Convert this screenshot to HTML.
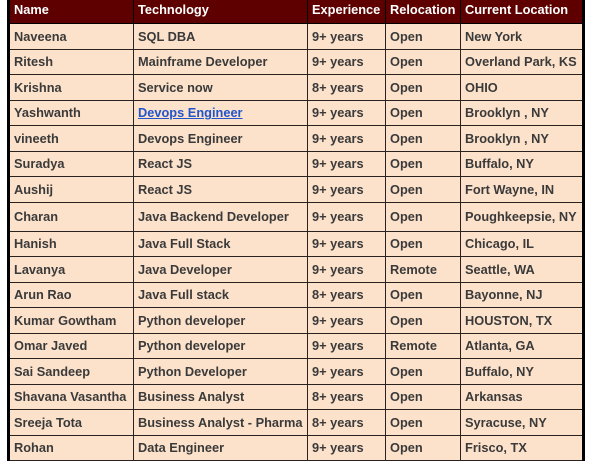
<!DOCTYPE html>
<html><head><meta charset="utf-8"><style>
html,body{margin:0;padding:0;background:#fff;width:600px;height:450px;overflow:hidden}
table{position:absolute;left:7px;top:-1px;border-collapse:collapse;table-layout:fixed;border-left:3px solid #000;border-right:3px solid #000;font-family:"Liberation Sans",Arial,sans-serif;font-weight:bold;font-size:12.8px}
td,th{border:1px solid #2a2220;padding:0 0 0 4px;text-align:left;white-space:nowrap;overflow:hidden;color:#3a3a3a;background:#fde2cb;box-sizing:border-box}
th{background:#5e0000;color:#fff;height:24px;border-color:#000;vertical-align:top;padding-top:2px}
td{height:25.5px;vertical-align:middle;padding-top:1px;line-height:14px}
tr.t td{height:29px}
a{color:#2255cc;text-decoration:underline}
</style></head><body>
<table>
<colgroup><col style="width:125px"><col style="width:174px"><col style="width:78px"><col style="width:75px"><col style="width:123px"></colgroup>
<tr><th>Name</th><th>Technology</th><th>Experience</th><th>Relocation</th><th>Current Location</th></tr>
<tr><td>Naveena</td><td>SQL DBA</td><td>9+ years</td><td>Open</td><td>New York</td></tr>
<tr><td>Ritesh</td><td>Mainframe Developer</td><td>9+ years</td><td>Open</td><td>Overland Park, KS</td></tr>
<tr><td>Krishna</td><td>Service now</td><td>8+ years</td><td>Open</td><td>OHIO</td></tr>
<tr><td>Yashwanth</td><td><a>Devops Engineer</a></td><td>9+ years</td><td>Open</td><td>Brooklyn , NY</td></tr>
<tr><td>vineeth</td><td>Devops Engineer</td><td>9+ years</td><td>Open</td><td>Brooklyn , NY</td></tr>
<tr><td>Suradya</td><td>React JS</td><td>9+ years</td><td>Open</td><td>Buffalo, NY</td></tr>
<tr><td>Aushij</td><td>React JS</td><td>9+ years</td><td>Open</td><td>Fort Wayne, IN</td></tr>
<tr class="t"><td>Charan</td><td>Java Backend Developer</td><td>9+ years</td><td>Open</td><td>Poughkeepsie, NY</td></tr>
<tr><td>Hanish</td><td>Java Full Stack</td><td>9+ years</td><td>Open</td><td>Chicago, IL</td></tr>
<tr><td>Lavanya</td><td>Java Developer</td><td>9+ years</td><td>Remote</td><td>Seattle, WA</td></tr>
<tr><td>Arun Rao</td><td>Java Full stack</td><td>8+ years</td><td>Open</td><td>Bayonne, NJ</td></tr>
<tr><td>Kumar Gowtham</td><td>Python developer</td><td>9+ years</td><td>Open</td><td>HOUSTON, TX</td></tr>
<tr><td>Omar Javed</td><td>Python developer</td><td>9+ years</td><td>Remote</td><td>Atlanta, GA</td></tr>
<tr><td>Sai Sandeep</td><td>Python Developer</td><td>9+ years</td><td>Open</td><td>Buffalo, NY</td></tr>
<tr><td>Shavana Vasantha</td><td>Business Analyst</td><td>8+ years</td><td>Open</td><td>Arkansas</td></tr>
<tr><td>Sreeja Tota</td><td>Business Analyst - Pharma</td><td>8+ years</td><td>Open</td><td>Syracuse, NY</td></tr>
<tr><td>Rohan</td><td>Data Engineer</td><td>9+ years</td><td>Open</td><td>Frisco, TX</td></tr>
</table>
</body></html>
